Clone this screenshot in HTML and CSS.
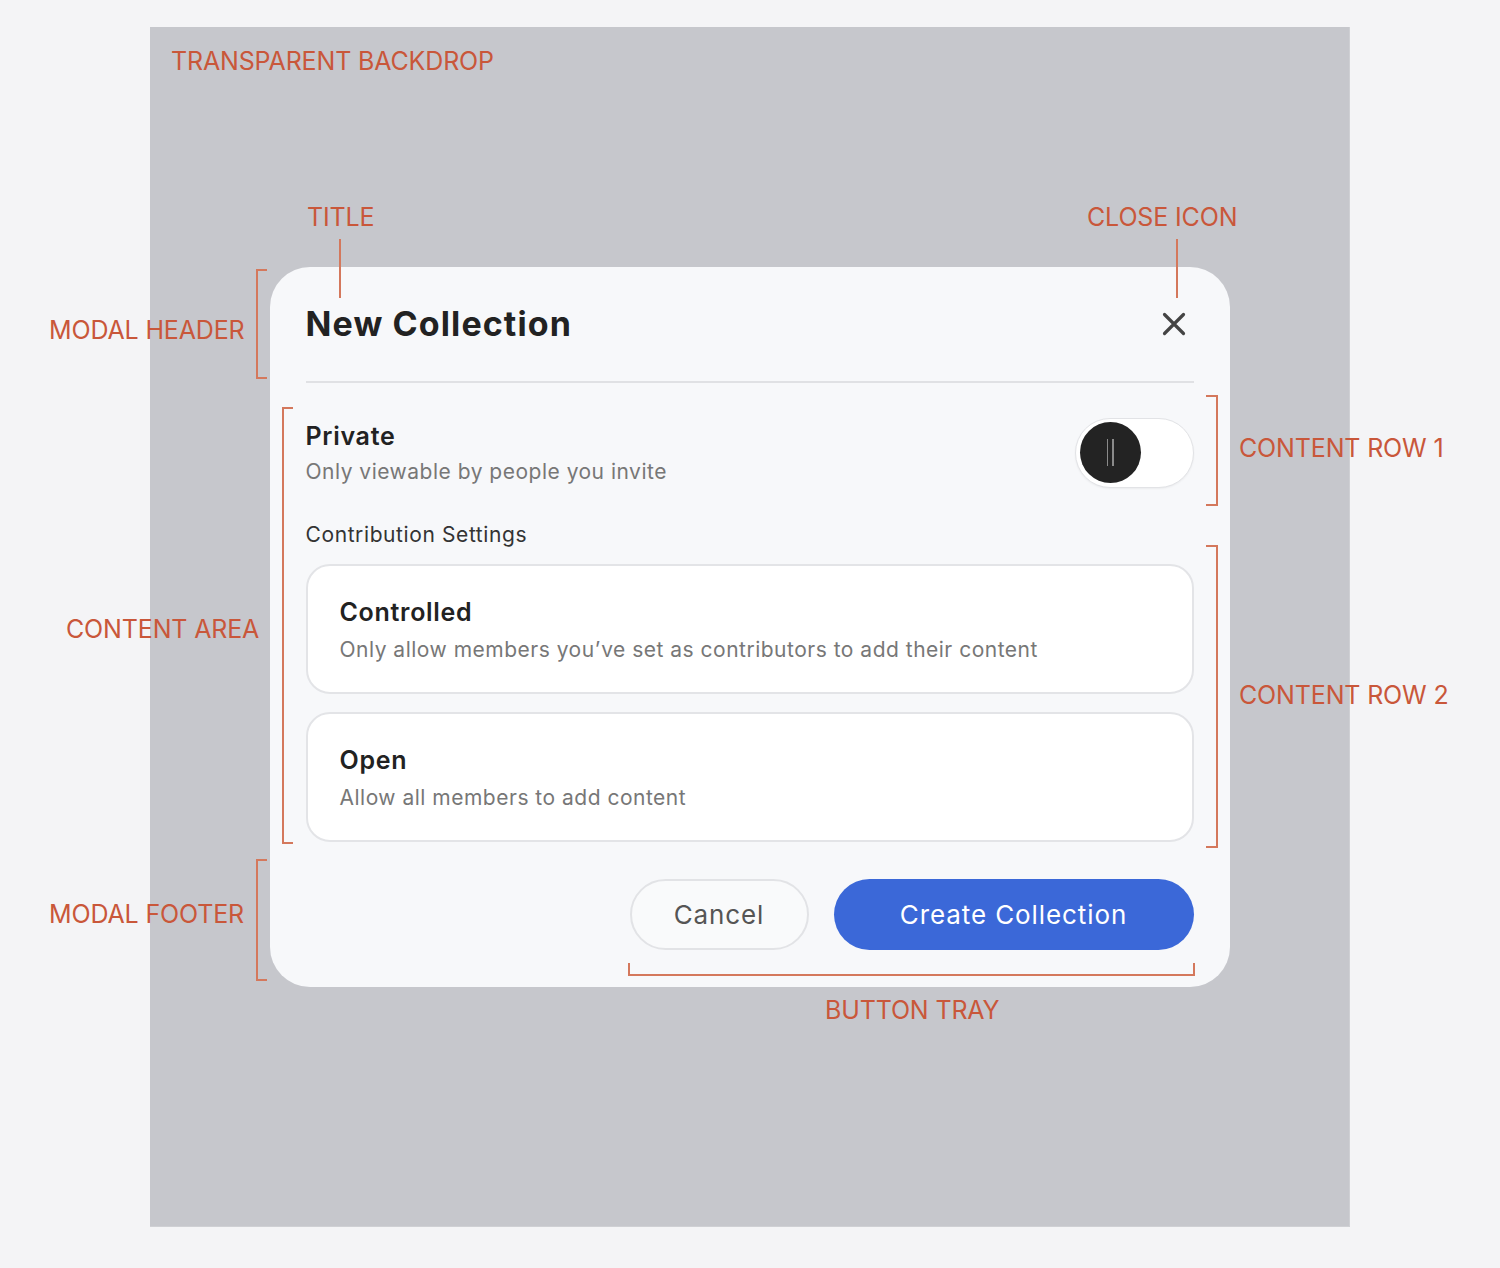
FILE: index.html
```html
<!DOCTYPE html>
<html lang="en">
<head>
<meta charset="utf-8">
<title>New Collection modal anatomy</title>
<link rel="stylesheet" href="styles.css">
</head>
<body>
<div class="stage">
  <div class="backdrop">
    <div class="modal">
      <header class="modal-header">
        <h1 class="modal-title">New Collection</h1>
        <button class="close-btn" aria-label="Close">
          <svg width="24" height="24" viewBox="0 0 24 24"><path d="M2.5 2.5 L21.5 21.5 M21.5 2.5 L2.5 21.5" stroke="#444" stroke-width="3.2" stroke-linecap="round" fill="none"/></svg>
        </button>
      </header>
      <section class="modal-content">
        <div class="row-private">
          <div class="text-block">
            <div class="item-title">Private</div>
            <div class="item-desc">Only viewable by people you invite</div>
          </div>
          <div class="toggle"><div class="knob"><span></span><span></span></div></div>
        </div>
        <div class="section-label">Contribution Settings</div>
        <div class="option-card">
          <div class="item-title">Controlled</div>
          <div class="item-desc">Only allow members you’ve set as contributors to add their content</div>
        </div>
        <div class="option-card">
          <div class="item-title">Open</div>
          <div class="item-desc">Allow all members to add content</div>
        </div>
      </section>
      <footer class="modal-footer">
        <button class="btn btn-cancel">Cancel</button>
        <button class="btn btn-primary">Create Collection</button>
      </footer>
    </div>
  </div>

  <div class="label lbl-backdrop">TRANSPARENT BACKDROP</div>
  <div class="label lbl-title">TITLE</div>
  <div class="label lbl-close">CLOSE ICON</div>
  <div class="label lbl-header">MODAL HEADER</div>
  <div class="label lbl-content">CONTENT AREA</div>
  <div class="label lbl-row1">CONTENT ROW 1</div>
  <div class="label lbl-row2">CONTENT ROW 2</div>
  <div class="label lbl-footer">MODAL FOOTER</div>
  <div class="label lbl-tray">BUTTON TRAY</div>

  <div class="pointer ptr-title"></div>
  <div class="pointer ptr-close"></div>
  <div class="bracket-left br-header"></div>
  <div class="bracket-left br-content"></div>
  <div class="bracket-left br-footer"></div>
  <div class="bracket-right br-row1"></div>
  <div class="bracket-right br-row2"></div>
  <div class="bracket-bottom br-tray"></div>
</div>
</body>
</html>
```

FILE: styles.css
```css
* { box-sizing: border-box; }
html, body { margin: 0; padding: 0; }
body {
  background: #f4f4f6;
  font-family: Inter, "Noto Sans", "Liberation Sans", sans-serif;
  width: 1500px;
  height: 1268px;
  overflow: hidden;
}
.stage {
  position: relative;
  width: 1500px;
  height: 1268px;
  padding: 27px 150px 0 150px;
}
.backdrop {
  width: 1200px;
  height: 1200px;
  background: #c6c7cc;
  border-right: 1px solid #cfd0d4;
  border-bottom: 1px solid #cfd0d4;
  display: flex;
  align-items: center;
  justify-content: center;
}
.modal {
  width: 960px;
  height: 720px;
  background: #f7f8fa;
  border-radius: 40px;
  padding: 0 36px;
  display: flex;
  flex-direction: column;
}
.modal-header {
  display: flex;
  align-items: center;
  justify-content: space-between;
  padding: 37px 0;
  border-bottom: 2px solid #e0e1e4;
}
.modal-title {
  margin: 0;
  font-size: 34px;
  line-height: 40px;
  font-weight: 700;
  color: #222;
  letter-spacing: 1.1px;
}
.close-btn {
  width: 24px;
  height: 24px;
  border: 0;
  padding: 0;
  margin-right: 8px;
  background: none;
  display: block;
}
.close-btn svg { display: block; }
.modal-content {
  display: flex;
  flex-direction: column;
  padding-top: 35px;
}
.row-private {
  display: flex;
  align-items: center;
  justify-content: space-between;
  height: 70px;
}
.text-block {
  display: flex;
  flex-direction: column;
  gap: 8px;
}
.item-title {
  font-size: 25px;
  line-height: 30px;
  font-weight: 600;
  color: #222;
  letter-spacing: 0.7px;
}
.item-desc {
  font-size: 21px;
  line-height: 26px;
  color: #777;
  letter-spacing: 0.5px;
}
.toggle {
  width: 119px;
  height: 70px;
  border-radius: 35px;
  background: #fff;
  border: 1.5px solid #e2e3e6;
  box-shadow: 0 1px 2px rgba(0,0,0,0.05);
  padding: 4px;
  display: flex;
  align-items: center;
}
.knob {
  width: 61px;
  height: 61px;
  border-radius: 50%;
  background: #232323;
  display: flex;
  align-items: center;
  justify-content: center;
  gap: 4px;
}
.knob span {
  width: 1.5px;
  height: 27px;
  background: #8a8a8a;
}
.section-label {
  margin-top: 34px;
  font-size: 21px;
  line-height: 26px;
  color: #333;
  letter-spacing: 0.6px;
}
.option-card {
  margin-top: 16px;
  height: 130px;
  background: #fff;
  border: 2px solid #e3e4e7;
  border-radius: 24px;
  padding: 31px 32px 0 32px;
  display: flex;
  flex-direction: column;
  gap: 10px;
}
.option-card + .option-card { margin-top: 18px; }
.modal-footer {
  display: flex;
  justify-content: flex-end;
  gap: 25px;
  padding-top: 37px;
}
.btn {
  height: 71px;
  border-radius: 36px;
  font-family: Inter, "Noto Sans", "Liberation Sans", sans-serif;
  font-size: 26px;
  font-weight: 400;
  padding: 0;
  letter-spacing: 0.9px;
}
.btn-cancel {
  width: 179px;
  background: #f9fafb;
  border: 2px solid #e2e3e6;
  color: #555;
}
.btn-primary {
  width: 360px;
  background: #3b68d8;
  border: 0;
  color: #fff;
}

/* annotations */
.label {
  position: absolute;
  font-size: 25px;
  line-height: 30px;
  color: #c9573a;
  white-space: nowrap;
  letter-spacing: -0.15px;
}
.lbl-backdrop { left: 171px; top: 46px; }
.lbl-title { left: 307px; top: 202px; }
.lbl-close { left: 1087px; top: 202px; }
.lbl-header { left: 49px; top: 315px; }
.lbl-content { left: 66px; top: 614px; }
.lbl-row1 { left: 1239px; top: 433px; }
.lbl-row2 { left: 1239px; top: 680px; }
.lbl-footer { left: 49px; top: 899px; }
.lbl-tray { left: 825px; top: 995px; }

.pointer {
  position: absolute;
  width: 2px;
  height: 59px;
  top: 239px;
  background: #d4785c;
}
.ptr-title { left: 339px; }
.ptr-close { left: 1176px; }

.bracket-left, .bracket-right, .bracket-bottom {
  position: absolute;
  border: 2px solid #d4785c;
}
.bracket-left { border-right: 0; width: 11px; }
.bracket-right { border-left: 0; width: 12px; }
.bracket-bottom { border-top: 0; height: 13px; }
.br-header { left: 256px; top: 269px; height: 110px; }
.br-content { left: 282px; top: 407px; height: 437px; }
.br-footer { left: 256px; top: 859px; height: 122px; }
.br-row1 { left: 1206px; top: 395px; height: 111px; }
.br-row2 { left: 1206px; top: 545px; height: 303px; }
.br-tray { left: 628px; top: 963px; width: 567px; }
```
